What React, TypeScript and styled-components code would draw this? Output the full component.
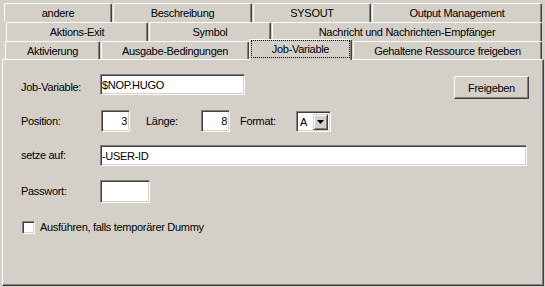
import styled, { createGlobalStyle } from 'styled-components';

const GlobalStyle = createGlobalStyle`
  html, body {
    margin: 0;
    padding: 0;
    background: #d4d0c8;
  }
  body {
    font-family: 'Liberation Sans', Arial, sans-serif;
    font-size: 11px;
    letter-spacing: -0.3px;
    color: #000;
  }
`;

type TabDef = { label: string; width: number; selected?: boolean };

const tabRows: { indent: number; height: number; tabs: TabDef[] }[] = [
  {
    indent: 4,
    height: 19,
    tabs: [
      { label: 'andere', width: 108 },
      { label: 'Beschreibung', width: 139 },
      { label: 'SYSOUT', width: 118 },
      { label: 'Output Management', width: 170 },
    ],
  },
  {
    indent: 6,
    height: 19,
    tabs: [
      { label: 'Aktions-Exit', width: 142 },
      { label: 'Symbol', width: 122 },
      { label: 'Nachricht und Nachrichten-Empfänger', width: 270 },
    ],
  },
  {
    indent: 5,
    height: 18,
    tabs: [
      { label: 'Aktivierung', width: 95 },
      { label: 'Ausgabe-Bedingungen', width: 148 },
      { label: 'Job-Variable', width: 103, selected: true },
      { label: 'Gehaltene Ressource freigeben', width: 189 },
    ],
  },
];

const App = () => {
  return (
    <>
      <GlobalStyle />
      <Dialog>
        <TabStrip>
          {tabRows.map((row, i) => (
            <TabRow key={i} $indent={row.indent} $height={row.height}>
              {row.tabs.map((tab) =>
                tab.selected ? (
                  <ActiveTab key={tab.label} $w={tab.width}>
                    <FocusRect>{tab.label}</FocusRect>
                  </ActiveTab>
                ) : (
                  <Tab key={tab.label} $w={tab.width}>
                    {tab.label}
                  </Tab>
                )
              )}
            </TabRow>
          ))}
        </TabStrip>

        <Panel>
          <FirstRow>
            <Label $w={79} $nudge={2}>Job-Variable:</Label>
            <Field $w={145} $h={21} value="$NOP.HUGO" readOnly />
            <PushButton>Freigeben</PushButton>
          </FirstRow>

          <FormRow $gap={11} $h={22}>
            <Label $w={80}>Position:</Label>
            <Field $w={29} $h={22} $right value="3" readOnly />
            <Label $w={55} $ml={16}>Länge:</Label>
            <Field $w={29} $h={22} $right value="8" readOnly />
            <Label $w={56} $ml={10}>Format:</Label>
            <Combo>
              <ComboText>A</ComboText>
              <DropButton>
                <svg width="7" height="4" viewBox="0 0 7 4">
                  <path d="M0 0h7L3.5 4z" fill="#000" />
                </svg>
              </DropButton>
            </Combo>
          </FormRow>

          <FormRow $gap={13} $h={21}>
            <Label $w={79}>setze auf:</Label>
            <Field $w={427} $h={21} value="-USER-ID" readOnly />
          </FormRow>

          <FormRow $gap={14} $h={23}>
            <Label $w={79}>Passwort:</Label>
            <Field $w={50} $h={23} type="password" value="" readOnly />
          </FormRow>

          <FormRow $gap={18} $h={13}>
            <CheckBox />
            <CheckLabel>Ausführen, falls temporärer Dummy</CheckLabel>
          </FormRow>
        </Panel>
      </Dialog>
    </>
  );
};

const Dialog = styled.div`
  width: 545px;
  height: 287px;
  box-sizing: border-box;
  padding-top: 3px;
  display: flex;
  flex-direction: column;
  background: #d4d0c8;
  overflow: hidden;
`;

const TabStrip = styled.div`
  display: flex;
  flex-direction: column;
`;

const TabRow = styled.div<{ $indent: number; $height: number }>`
  display: flex;
  height: ${(p) => p.$height}px;
  padding-left: ${(p) => p.$indent}px;
`;

const Tab = styled.div<{ $w: number }>`
  width: ${(p) => p.$w}px;
  height: 100%;
  box-sizing: border-box;
  margin-right: 1px;
  border-top: 1px solid #fff;
  border-left: 1px solid #fff;
  border-right: 1px solid #404040;
  border-radius: 2px 2px 0 0;
  box-shadow: inset -1px 0 0 #808080;
  display: flex;
  align-items: center;
  justify-content: center;
  white-space: nowrap;
  background: #d4d0c8;
`;

const ActiveTab = styled(Tab)`
  position: relative;
  z-index: 1;
  margin-left: -1px;
  margin-top: -2px;
  height: 21px;
  padding: 0 1px 2px 1px;
  align-items: stretch;
`;

const FocusRect = styled.span`
  flex: 1;
  border: 1px dotted #000;
  display: flex;
  align-items: center;
  justify-content: center;
`;

const Panel = styled.div`
  margin-left: 2px;
  width: 542px;
  height: 227px;
  box-sizing: border-box;
  border-top: 1px solid #fff;
  border-left: 1px solid #fff;
  border-right: 1px solid #404040;
  border-bottom: 1px solid #404040;
  box-shadow: inset -1px -1px 0 #808080;
  padding: 14px 15px 0 18px;
  display: flex;
  flex-direction: column;
`;

const FirstRow = styled.div`
  display: flex;
  align-items: flex-start;
  height: 25px;
`;

const FormRow = styled.div<{ $gap: number; $h: number }>`
  display: flex;
  align-items: center;
  margin-top: ${(p) => p.$gap}px;
  height: ${(p) => p.$h}px;
`;

const Label = styled.span<{ $w: number; $ml?: number; $nudge?: number }>`
  width: ${(p) => p.$w}px;
  margin-left: ${(p) => p.$ml ?? 0}px;
  padding-top: ${(p) => p.$nudge ?? 0}px;
  line-height: 13px;
  align-self: center;
  white-space: nowrap;
`;

const Field = styled.input<{ $w: number; $h: number; $right?: boolean }>`
  width: ${(p) => p.$w}px;
  height: ${(p) => p.$h}px;
  box-sizing: border-box;
  margin: 0;
  padding: 0 ${(p) => (p.$right ? 2 : 1)}px;
  border: 1px solid;
  border-color: #808080 #fff #fff #808080;
  box-shadow: inset 1px 1px 0 #404040, inset -1px -1px 0 #d4d0c8;
  background: #fff;
  font-family: 'Liberation Sans', Arial, sans-serif;
  font-size: 11px;
  letter-spacing: -0.3px;
  color: #000;
  text-align: ${(p) => (p.$right ? 'right' : 'left')};
  outline: none;
`;

const PushButton = styled.button`
  margin: 2px 0 0 auto;
  width: 75px;
  height: 23px;
  box-sizing: border-box;
  padding: 0;
  border: 1px solid;
  border-color: #fff #404040 #404040 #fff;
  box-shadow: inset -1px -1px 0 #808080;
  background: #d4d0c8;
  font-family: 'Liberation Sans', Arial, sans-serif;
  font-size: 11px;
  letter-spacing: -0.3px;
  color: #000;
  position: relative;
  right: -1px;
`;

const Combo = styled.div`
  width: 35px;
  height: 21px;
  box-sizing: border-box;
  border: 1px solid;
  border-color: #808080 #fff #fff #808080;
  box-shadow: inset 1px 1px 0 #404040, inset -1px -1px 0 #d4d0c8;
  background: #fff;
  display: flex;
  align-items: stretch;
  padding: 2px 2px 1px 2px;
`;

const ComboText = styled.span`
  flex: 1;
  display: flex;
  align-items: center;
  padding-left: 1px;
  font-size: 11px;
`;

const DropButton = styled.span`
  width: 15px;
  box-sizing: border-box;
  border: 1px solid;
  border-color: #d4d0c8 #404040 #404040 #d4d0c8;
  box-shadow: inset 1px 1px 0 #fff, inset -1px -1px 0 #808080;
  background: #d4d0c8;
  display: flex;
  align-items: center;
  justify-content: center;
`;

const CheckBox = styled.span`
  width: 13px;
  height: 13px;
  box-sizing: border-box;
  border: 1px solid;
  border-color: #808080 #fff #fff #808080;
  box-shadow: inset 1px 1px 0 #404040, inset -1px -1px 0 #d4d0c8;
  background: #fff;
  margin-left: 1px;
`;

const CheckLabel = styled.span`
  margin-left: 5px;
  line-height: 13px;
  white-space: nowrap;
`;

export default App;
